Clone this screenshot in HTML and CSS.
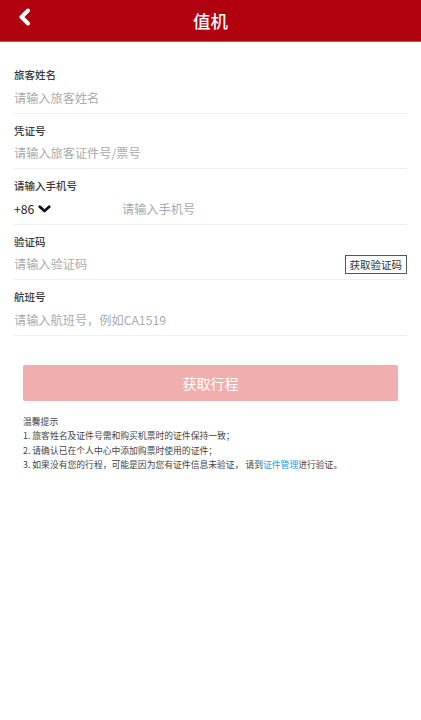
FILE: index.html
```html
<!DOCTYPE html>
<html lang="zh">
<head>
<meta charset="utf-8">
<link rel="stylesheet" href="styles.css">
</head>
<body>
<header class="topbar">
  <span class="back"><svg width="14" height="18" viewBox="0 0 14 18"><polyline points="10,2.5 3.5,9 10,15.5" fill="none" stroke="#fff" stroke-width="4" stroke-linecap="round" stroke-linejoin="round"/></svg></span>
  <h1 class="title">值机</h1>
</header>
<main class="form">
  <div class="row">
    <div class="label">旅客姓名</div>
    <div class="field"><span class="ph">请输入旅客姓名</span></div>
  </div>
  <div class="row">
    <div class="label">凭证号</div>
    <div class="field"><span class="ph">请输入旅客证件号/票号</span></div>
  </div>
  <div class="row">
    <div class="label">请输入手机号</div>
    <div class="field">
      <span class="code">+86<svg class="caret" width="13" height="8" viewBox="0 0 13 8"><polyline points="1.8,1.8 6.5,6 11.2,1.8" fill="none" stroke="#111" stroke-width="2.8" stroke-linecap="round" stroke-linejoin="round"/></svg></span>
      <span class="ph">请输入手机号</span>
    </div>
  </div>
  <div class="row">
    <div class="label">验证码</div>
    <div class="field between"><span class="ph">请输入验证码</span><span class="sms">获取验证码</span></div>
  </div>
  <div class="row">
    <div class="label">航班号</div>
    <div class="field"><span class="ph">请输入航班号，例如CA1519</span></div>
  </div>
  <div class="btn">获取行程</div>
  <div class="tips">
    <p>温馨提示</p>
    <p>1. 旅客姓名及证件号需和购买机票时的证件保持一致；</p>
    <p>2. 请确认已在个人中心中添加购票时使用的证件；</p>
    <p>3. 如果没有您的行程，可能是因为您有证件信息未验证，&nbsp;请到<span class="link">证件管理</span>进行验证。</p>
  </div>
</main>
</body>
</html>
```

FILE: styles.css
```css
* { box-sizing: border-box; }
html, body { margin: 0; padding: 0; background: #fff; }
body {
  font-family: "Noto Sans CJK SC", "Noto Sans", Roboto, sans-serif;
  color: #333;
  width: 421px;
}
.topbar {
  height: 42px;
  background: #b1000e;
  border-bottom: 1px solid #d9505a;
  display: flex;
  align-items: center;
  justify-content: center;
  position: relative;
}
.back {
  position: absolute;
  left: 18px;
  top: 8px;
  display: flex;
}
.title {
  margin: 0;
  font-size: 17.5px;
  font-weight: 500;
  color: #fff;
  line-height: 24px;
}
.form {
  padding: 16px 14px 0 14px;
}
.row {
  height: 55.5px;
  padding-top: 8px;
  border-bottom: 1px solid #efefef;
  display: flex;
  flex-direction: column;
}
.label {
  font-size: 10.5px;
  line-height: 17px;
  color: #3a3a3a;
  font-weight: 500;
}
.field {
  margin-top: 4.5px;
  height: 20px;
  display: flex;
  align-items: center;
  font-size: 12.2px;
}
.between { justify-content: space-between; }
.ph { color: #ababab; }
.code {
  width: 108px;
  color: #222;
  display: flex;
  align-items: center;
  gap: 4px;
}
.caret { margin-top: 1px; }
.sms {
  border: 1px solid #555;
  font-size: 10.5px;
  line-height: 17px;
  padding: 0 4px;
  color: #333;
}
.btn {
  margin: 29px 9px 0 9px;
  height: 36px;
  background: #f0aeae;
  border-radius: 2px;
  color: #fff;
  font-size: 14px;
  display: flex;
  align-items: center;
  justify-content: center;
}
.tips {
  margin: 14px 9px 0 9px;
  font-size: 8.8px;
  color: #444;
}
.tips p {
  margin: 0;
  line-height: 14.5px;
}
.link { color: #2a9ee0; }
```
